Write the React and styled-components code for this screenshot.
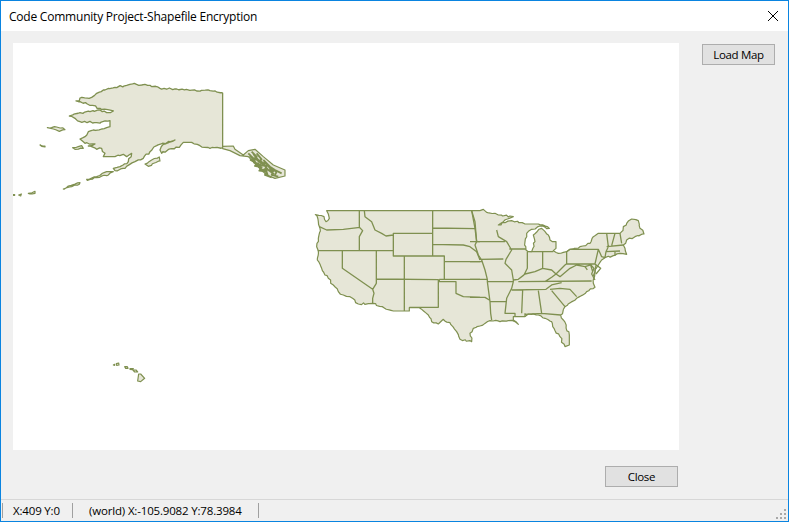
import styled, { createGlobalStyle } from 'styled-components'

// STYLES
const GlobalStyle = createGlobalStyle`
  html, body { margin: 0; padding: 0; height: 100%; background: #F0F0F0; }
  #root { height: 100%; }
`

const Window = styled.div`
  box-sizing: border-box;
  height: 522px;
  width: 789px;
  display: flex;
  flex-direction: column;
  border: 1px solid #0A84E0;
  background: #F0F0F0;
  font-family: "Open Sans", "Noto Sans", sans-serif;
  font-size: 12px;
  color: #000;
  overflow: hidden;
`

const TitleBar = styled.div`
  box-sizing: border-box;
  height: 30px;
  flex: none;
  display: flex;
  align-items: center;
  justify-content: space-between;
  background: #fff;
  padding: 0 10px 0 8px;
`

const Title = styled.span`
  font-size: 12px;
  letter-spacing: -0.22px;
`

const Content = styled.div`
  flex: 1;
  display: flex;
  flex-direction: column;
  padding: 12px 110px 12px 12px;
`

const MapRow = styled.div`
  display: flex;
  gap: 23px;
  align-items: flex-start;
`

const MapPanel = styled.div`
  width: 666px;
  height: 407px;
  flex: none;
  background: #fff;
`

const MapSvg = styled.svg`
  display: block;
  path { vector-effect: non-scaling-stroke; stroke-linejoin: round; }
`

const Land = styled.path`
  fill: #E6E6D7;
  stroke: #7F9050;
  stroke-width: ${props => props.$weight || 1.2};
`

const Lines = styled.path`
  fill: none;
  stroke: #7F9050;
  stroke-width: ${props => props.$weight || 1.3};
`

const Button = styled.button`
  box-sizing: border-box;
  width: 73px;
  height: 21px;
  flex: none;
  margin-top: ${props => props.$top || '0'};
  padding: 0;
  background: #E1E1E1;
  border: 1px solid #ADADAD;
  border-radius: 0;
  font-family: inherit;
  font-size: 11.5px;
  letter-spacing: -0.35px;
  color: #000;
`

const Footer = styled.div`
  display: flex;
  justify-content: flex-end;
  margin-top: 16px;
`

const StatusBar = styled.div`
  height: 22px;
  flex: none;
  box-sizing: border-box;
  border-top: 1px solid #D7D7D7;
  display: flex;
  align-items: center;
  padding-left: 1px;
  position: relative;
`

const StatusCell = styled.div`
  box-sizing: border-box;
  height: 15px;
  width: ${props => props.$width};
  padding-left: ${props => props.$pad};
  border-left: 1px solid #A0A0A0;
  border-right: ${props => props.$end ? '1px solid #A0A0A0' : 'none'};
  font-size: 11.5px;
  line-height: 15px;
  letter-spacing: -0.17px;
  white-space: nowrap;
`

const Grip = styled.svg`
  position: absolute;
  right: 2px;
  bottom: 2px;
`

// HELPERS
// coast lines are traced coarse, this breaks the long segments up so they read as a shoreline
const roughen = d => {
  let seed = 7
  const next = () => {
    seed = (seed * 16807) % 2147483647
    return (seed % 1000) / 1000 - 0.5
  }
  return d.split(/(?=M)/).map(part => {
    const closed = /Z\s*$/.test(part)
    const pts = part.replace(/[MLZ]/g, ' ').trim().split(/\s+/).map(Number)
    const out = []
    for (let i = 0; i + 1 < pts.length; i += 2) {
      const [x, y, nx, ny] = [pts[i], pts[i + 1], pts[i + 2], pts[i + 3]]
      out.push(`${x} ${y}`)
      if (nx === undefined || x === nx || y === ny) continue
      const steps = Math.floor(Math.hypot(nx - x, ny - y) / 7)
      for (let s = 1; s < steps; s++) {
        const t = s / steps
        out.push(`${x + (nx - x) * t + next() * 6} ${y + (ny - y) * t + next() * 6}`)
      }
    }
    return `M${out.join(' L')}${closed ? ' Z' : ''}`
  }).join(' ')
}

// MAP DATA
// traced in 3x crop coordinates, each group scaled back down to the page
const alaska = `M668 98 L630 92 L590 93 L530 87 L480 85 L450 76 L425 75 L403 70 L380 76 L345 82 L310 90 L290 100 L275 112 L240 114 L238 122 L228 123 L262 132 L300 145 L340 153 L320 158 L300 150 L270 155 L240 158 L208 168 L225 175 L240 185 L290 188 L315 183 L330 182 L330 200 L305 207 L280 210 L265 215 L255 230 L240 237 L255 250 L285 252 L265 258 L290 268 L305 265 L315 280 L310 290 L345 290 L370 283 L380 290 L395 280 L385 305 L360 320 L340 325 L345 332 L375 325 L405 305 L430 295 L450 275 L470 257 L525 240 L490 253 L480 270 L485 280 L510 267 L538 262 L550 247 L575 247 L600 257 L630 265 L668 263 L668 98`

const panhandle = `M668 259 L700 258 L705 268 L730 285 L745 272 L765 268 L790 290 L820 315 L855 330 L855 348 L825 355 L800 345 L780 325 L745 290 L720 287 L690 272 L668 266 Z`

const panhandleIslands = `M745 280 L760 295 L752 300 L770 310 L765 318 L785 322 L778 332 L800 335 L795 345 L815 352 M755 275 L770 290 L762 296 L785 305 L780 315 L800 318 L795 328 L820 332 L815 345 L835 350 M770 280 L785 298 L775 305 L800 312 L810 325 L830 335 L825 345 M750 285 L765 305 L775 320 L790 335 M790 300 L810 320 L825 330 L845 340 M760 282 L775 300 L790 312 L805 330 L822 342 M748 290 L758 292 L762 308 L776 312 L782 328 L798 330 L804 348`

const alaskaIslands = [
  'M260 358 L290 350 L320 335 L340 335 L325 345 L290 353 L262 361 Z',
  'M190 387 L205 378 L225 372 L240 368 L238 373 L215 380 L192 388 Z',
  'M85 400 L105 394 L105 400 L90 402 Z',
  'M56 405 L64 402 L62 408 Z',
  'M40 404 L44 404 L44 406 L40 406 Z',
  'M120 255 L135 258 L135 261 L125 259 Z',
  'M218 263 L245 257 L250 265 L225 268 Z',
  'M142 203 L170 201 L195 209 L178 214 L160 207 Z',
  'M435 312 L455 300 L478 291 L480 303 L445 319 Z',
]

const westLand = `M540 32 L80 32 L85 42 L88 55 L78 65 L72 50 L46 44 L55 65 L60 85 L55 115 L50 140 L55 152 L52 180 L65 205 L85 235 L100 255 L115 275 L130 285 L150 290 L175 312 L218 310 L280 333 L328 333 L328 323 L358 323 L385 345 L395 365 L415 372 L430 358 L450 368 L470 395 L480 418 L515 425 L510 400 L520 385 L540 378`

const westLines = `M58 80 L80 90 L130 88 L180 82 M178 32 L178 82 L188 92 L178 110 L178 152 M193 32 L195 50 L215 65 L225 90 L245 100 L258 108 L280 105 M53 152 L280 152 M127 152 L127 205 L218 268 L222 280 L218 295 L218 310 M229 152 L229 237 L229 250 L218 268 M229 237 L415 239 M280 100 L398 100 L398 168 L280 168 Z M398 32 L398 168 M313 168 L433 168 L433 238 M313 168 L313 333 M415 238 L415 322 L328 322 M418 238 L540 238 M418 238 L418 245 L468 245 L468 280 L490 290 L540 292 M433 185 L540 185 M398 84 L527 86 M398 133 L490 135 L510 140 L530 155 L540 180 M515 32 L525 65 L530 125 L540 125`

const eastLand = `M30 378 L60 362 L90 365 L115 362 L135 365 L145 373 L130 360 L130 350 L165 350 L175 342 L205 345 L225 355 L245 365 L252 385 L270 410 L285 440 L298 435 L298 405 L280 360 L272 345 L285 320 L320 295 L350 275 L375 262 L370 250 L372 235 L375 210 L385 195 L395 180 L405 173 L430 167 L450 160 L470 163 L465 145 L460 135 L470 120 L495 110 L522 102 L510 85 L505 62 L485 57 L470 70 L455 95 L450 100 L385 100 L370 110 L360 130 L330 140 L300 148 L290 155 L265 160 L250 152 L258 145 L258 125 L240 120 L235 105 L215 85 L190 105 L195 125 L185 155 L168 150 L165 125 L170 100 L185 88 L210 78 L238 85 L205 72 L165 72 L125 62 L105 68 L85 75 L100 65 L130 50 L85 45 L75 40 L50 37 L40 28 L30 32`

const eastLines = `M5 32 L15 85 L20 125 M0 125 L105 125 M28 178 L100 177 M20 125 L15 135 L25 165 L35 180 L45 210 L52 238 M0 185 L35 185 M0 238 L52 238 L52 245 L130 245 M52 245 L60 305 L110 305 M60 305 L62 340 L65 360 M0 292 L45 292 L58 300 M125 265 L110 295 L105 340 L135 340 L135 350 M80 90 L85 110 L110 125 L125 150 L108 178 L105 190 L125 210 L130 240 L130 245 L125 265 M118 147 L168 147 M172 155 L172 205 L162 225 M130 240 L145 238 L162 225 M172 155 L250 155 M218 155 L218 205 M145 238 L165 222 L195 215 L218 205 L245 210 L258 222 L285 195 L292 190 M258 222 L270 230 L300 205 L320 195 L345 200 L352 210 M290 155 L300 148 L385 148 L395 170 L405 173 M385 148 L380 170 L375 192 L290 192 L290 155 M145 245 L365 243 M225 245 L245 232 L258 222 M125 270 L228 268 L245 255 L275 248 M240 268 L270 265 L300 268 L320 290 M245 272 L285 320 M205 272 L215 340 M158 270 L155 340 M165 343 L215 340 L272 345 M165 340 L165 350 M410 100 L415 140 L408 155 L405 173 M435 100 L425 137 M450 100 L455 130 M410 140 L460 135 M408 155 L450 153 M435 155 L435 167 M360 192 L372 205 L365 222 L375 240 M345 200 L362 195 L368 215 M378 195 L375 215 L370 228 M375 192 L392 205 L378 222`

const hawaii = [
  'M40 45 L44 43 L44 46 Z',
  'M49 41 L56 39 L57 45 L50 46 Z',
  'M74 50 L82 50 L84 55 L77 55 Z',
  'M90 56 L100 56 L98 59 L90 58 Z',
  'M99 60 L108 60 L113 66 L104 66 Z',
  'M116 72 L122 72 L134 85 L122 95 L113 93 Z',
]

const gripDots = [[8, 0], [4, 4], [8, 4], [0, 8], [4, 8], [8, 8]]

// MAIN COMPONENT
export default function App() {
  return (
    <>
      <GlobalStyle />
      <Window>
        <TitleBar>
          <Title>Code Community Project-Shapefile Encryption</Title>
          <svg width="10" height="10" viewBox="0 0 10 10">
            <path d="M0 0 L10 10 M10 0 L0 10" stroke="#000" strokeWidth="1" fill="none" />
          </svg>
        </TitleBar>

        <Content>
          <MapRow>
            <MapPanel>
              <MapSvg width="666" height="407" viewBox="13 43 666 407">
                <g transform="translate(0 60) scale(0.3333)">
                  <Land d={roughen(alaska)} $weight={1.3} />
                  <Land d={panhandle} />
                  <Lines d={panhandleIslands} $weight={1.8} />
                  {alaskaIslands.map(d => <Land key={d} d={roughen(d)} />)}
                </g>
                <g transform="translate(300 200) scale(0.3333)">
                  <Land d={roughen(westLand)} />
                  <Lines d={westLines} />
                </g>
                <g transform="translate(470 200) scale(0.3333)">
                  <Land d={roughen(eastLand)} />
                  <Lines d={eastLines} />
                </g>
                <g transform="translate(100 350) scale(0.3333)">
                  {hawaii.map(d => <Land key={d} d={d} />)}
                </g>
              </MapSvg>
            </MapPanel>
            <Button $top="1px">Load Map</Button>
          </MapRow>

          <Footer>
            <Button>Close</Button>
          </Footer>
        </Content>

        <StatusBar>
          <StatusCell $width="70px" $pad="10px">X:409 Y:0</StatusCell>
          <StatusCell $width="187px" $pad="16px" $end>(world) X:-105.9082 Y:78.3984</StatusCell>
          <Grip width="10" height="10" viewBox="0 0 10 10">
            {gripDots.map(([x, y]) => <rect key={`${x}-${y}`} x={x} y={y} width="2" height="2" fill="#A8A8A8" />)}
          </Grip>
        </StatusBar>
      </Window>
    </>
  )
}
